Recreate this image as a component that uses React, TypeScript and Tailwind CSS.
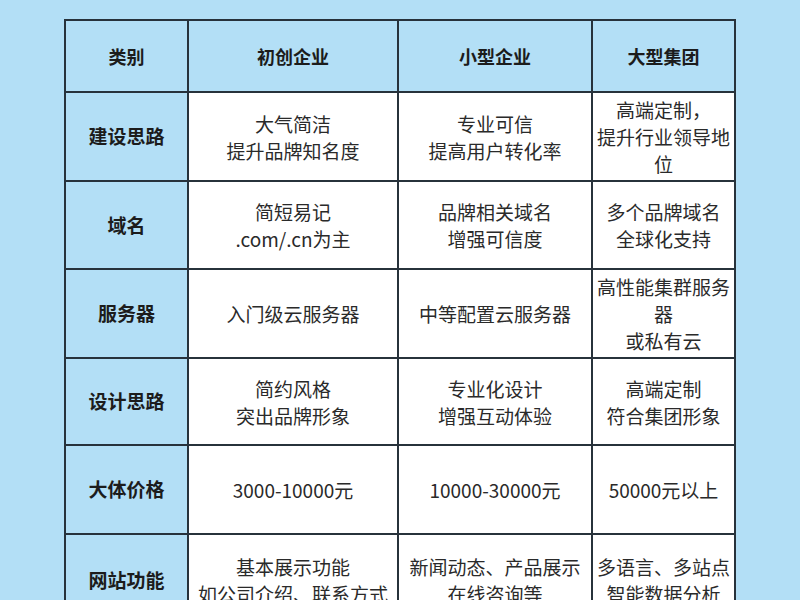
import React from 'react';

type Row = { label: string; cells: string[][] };

const headers = ['类别', '初创企业', '小型企业', '大型集团'];

const rows: Row[] = [
    { label: '建设思路', cells: [['大气简洁', '提升品牌知名度'], ['专业可信', '提高用户转化率'], ['高端定制，', '提升行业领导地', '位']] },
    { label: '域名', cells: [['简短易记', '.com/.cn为主'], ['品牌相关域名', '增强可信度'], ['多个品牌域名', '全球化支持']] },
    { label: '服务器', cells: [['入门级云服务器'], ['中等配置云服务器'], ['高性能集群服务', '器', '或私有云']] },
    { label: '设计思路', cells: [['简约风格', '突出品牌形象'], ['专业化设计', '增强互动体验'], ['高端定制', '符合集团形象']] },
    { label: '大体价格', cells: [['3000-10000元'], ['10000-30000元'], ['50000元以上']] },
    { label: '网站功能', cells: [['基本展示功能', '如公司介绍、联系方式'], ['新闻动态、产品展示', '在线咨询等'], ['多语言、多站点', '智能数据分析']] },
];

const heights = ['h-[87px]', 'h-[86px]', 'h-[87px]', 'h-[85px]', 'h-[87px]', 'h-[90px]'];

const App: React.FC = () => {
    return (
        <div
            className="w-[800px] h-[600px] overflow-hidden bg-[#b3dff6] pt-[19px] pl-[64px]"
            style={{ fontFamily: '"Noto Sans CJK SC", "Noto Sans", sans-serif' }}
        >
            <div className="grid grid-cols-[121px_208px_192px_141px] gap-[2px] bg-[#27323b] p-[2px] w-[672px]">
                {/* 表头 */}
                {headers.map((h) => (
                    <div key={h} className="h-[70px] bg-[#b3dff6] flex items-center justify-center text-[18px] font-bold text-[#1c1c1c]">
                        {h}
                    </div>
                ))}
                {rows.map((r, i) => (
                    <React.Fragment key={r.label}>
                        <div className={`${heights[i]} bg-[#b3dff6] flex items-center justify-center text-[19px] font-bold text-[#1c1c1c]`}>
                            {r.label}
                        </div>
                        {r.cells.map((lines, j) => (
                            <div key={j} className={`${heights[i]} bg-white flex flex-col items-center justify-center text-[19px] leading-[27px] text-[#2a2a2a]`}>
                                {lines.map((l) => (
                                    <span key={l} className="whitespace-nowrap">{l}</span>
                                ))}
                            </div>
                        ))}
                    </React.Fragment>
                ))}
            </div>
        </div>
    );
};

export default App;
